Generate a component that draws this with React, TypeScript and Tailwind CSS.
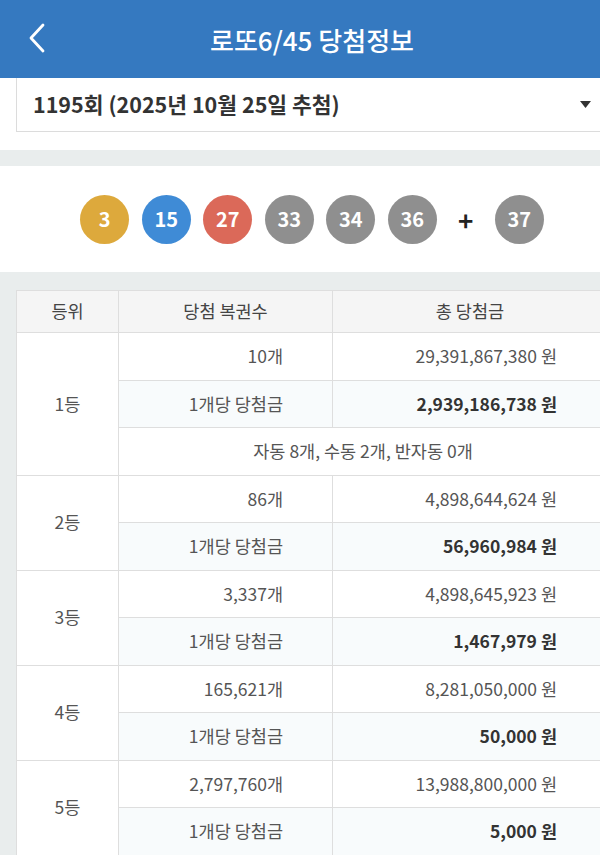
import React from "react";

const FONT = { fontFamily: '"Noto Sans CJK KR", "Noto Sans", sans-serif' };

type Rank = {
  rank: string;
  count: string;
  total: string;
  each: string;
  note?: string;
};

const RANKS: Rank[] = [
  { rank: "1등", count: "10개", total: "29,391,867,380 원", each: "2,939,186,738 원", note: "자동 8개, 수동 2개, 반자동 0개" },
  { rank: "2등", count: "86개", total: "4,898,644,624 원", each: "56,960,984 원" },
  { rank: "3등", count: "3,337개", total: "4,898,645,923 원", each: "1,467,979 원" },
  { rank: "4등", count: "165,621개", total: "8,281,050,000 원", each: "50,000 원" },
  { rank: "5등", count: "2,797,760개", total: "13,988,800,000 원", each: "5,000 원" },
];

const BALLS = [
  { n: 3, c: "bg-[#dda93c]" },
  { n: 15, c: "bg-[#3f8bd6]" },
  { n: 27, c: "bg-[#db6959]" },
  { n: 33, c: "bg-[#8f8f8f]" },
  { n: 34, c: "bg-[#8f8f8f]" },
  { n: 36, c: "bg-[#8f8f8f]" },
];

function Ball({ n, c }: { n: number; c: string }) {
  return (
    <div className={`flex h-[49px] w-[49px] items-center justify-center rounded-full text-[20px] font-bold text-white ${c}`}>
      {n}
    </div>
  );
}

export default function App() {
  return (
    <div className="w-full overflow-hidden bg-[#e9eded]" style={FONT}>
      <div className="w-[624px]">
        {/* 상단 헤더 */}
        <header className="relative flex h-[78px] items-center justify-center bg-[#3579c0]">
          <svg className="absolute left-[26px] top-[22px]" width="22" height="32" viewBox="0 0 22 32" fill="none">
            <path d="M17 3 L5 16 L17 29" stroke="white" strokeWidth="2.8" strokeLinecap="round" strokeLinejoin="round" />
          </svg>
          <h1 className="text-[26px] font-medium text-white">로또6/45 당첨정보</h1>
        </header>

        {/* 회차 선택 */}
        <div className="bg-white pb-[18px] pl-4 pr-4">
          <div className="flex h-[54px] items-center justify-between border-b border-l border-[#dcdcdc] pl-4 pr-4">
            <span className="text-[21.5px] font-bold text-[#333]">1195회 (2025년 10월 25일 추첨)</span>
            <svg width="11" height="7" viewBox="0 0 11 7" className="mr-[1px]">
              <path d="M0 0 H11 L5.5 7 Z" fill="#333" />
            </svg>
          </div>
        </div>

        {/* 당첨번호 */}
        <div className="mt-4 flex h-[106px] items-center justify-center gap-[12.5px] bg-white">
          {BALLS.map((b) => (
            <Ball key={b.n} n={b.n} c={b.c} />
          ))}
          <span className="flex w-[33px] justify-center text-[26px] font-bold text-[#222]">+</span>
          <Ball n={37} c="bg-[#8f8f8f]" />
        </div>

        {/* 등위별 당첨금 */}
        <div className="mt-[18px] pl-4 pr-4">
          <table className="w-full border-collapse bg-white text-[17.5px] text-[#555]">
            <thead>
              <tr className="h-[42px] bg-[#f5f5f5] text-[#444]">
                <th className="w-[102px] border border-[#dedede] font-normal">등위</th>
                <th className="w-[214px] border border-[#dedede] font-normal">당첨 복권수</th>
                <th className="border border-[#dedede] font-normal">총 당첨금</th>
              </tr>
            </thead>
            <tbody>
              {RANKS.map((r) => (
                <React.Fragment key={r.rank}>
                  <tr className="h-[47.5px]">
                    <td rowSpan={r.note ? 3 : 2} className="border border-[#dedede] text-center">
                      {r.rank}
                    </td>
                    <td className="border border-[#dedede] pr-[49px] text-right">{r.count}</td>
                    <td className="border border-[#dedede] pr-[50px] text-right">{r.total}</td>
                  </tr>
                  <tr className="h-[47.5px] bg-[#f8fbfc]">
                    <td className="border border-[#dedede] pr-[49px] text-right">1개당 당첨금</td>
                    <td className="border border-[#dedede] pr-[50px] text-right font-bold text-[#333]">{r.each}</td>
                  </tr>
                  {r.note && (
                    <tr className="h-[47.5px]">
                      <td colSpan={2} className="border border-[#dedede] text-center">
                        {r.note}
                      </td>
                    </tr>
                  )}
                </React.Fragment>
              ))}
            </tbody>
          </table>
        </div>
      </div>
    </div>
  );
}
